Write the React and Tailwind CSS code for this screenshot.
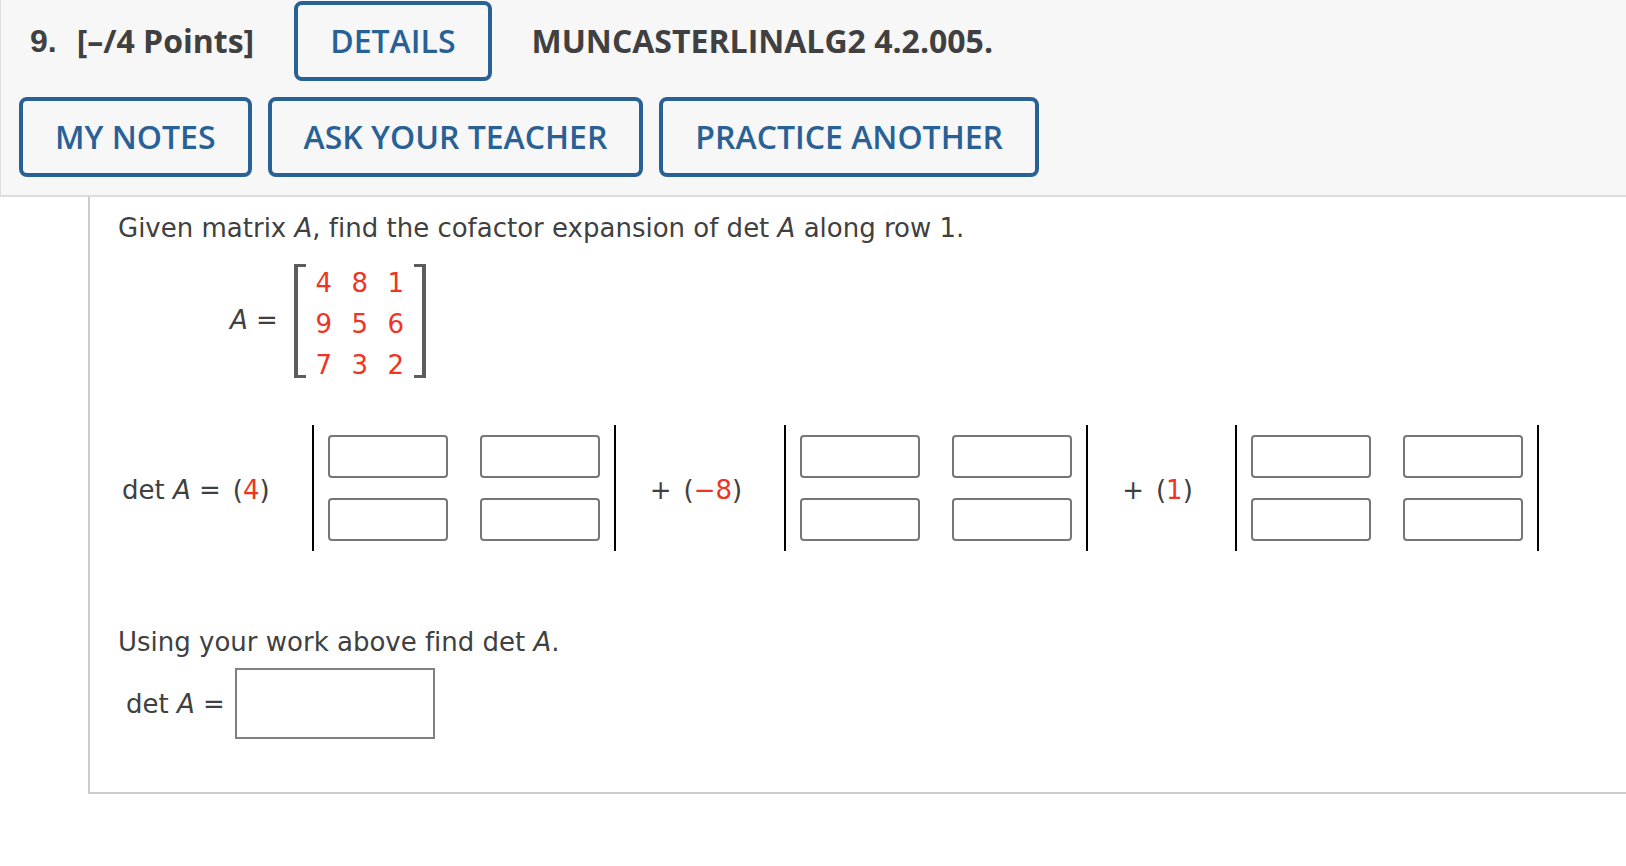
const matrix = [
  [4, 8, 1],
  [9, 5, 6],
  [7, 3, 2],
]

const terms = [
  { lead: <>det <i>A</i> = </>, coefficient: '4' },
  { lead: '+', coefficient: '−8' },
  { lead: '+', coefficient: '1' },
]

export default function App() {
  return (
    <main className="min-h-screen overflow-x-hidden bg-white font-['DejaVu_Sans',Verdana,sans-serif] text-[26px] leading-8 text-[#404040] [font-variant-ligatures:none]">
      <QuestionHeader />
      <section className="ml-[88px] border-b-2 border-l-2 border-[#cccccc] pt-[15px] pb-[53px] pl-7">
        <p>
          Given matrix <i>A</i>, find the cofactor expansion of det <i>A</i> along row 1.
        </p>
        <MatrixA />
        <div className="mt-10 flex items-center pl-1">
          {terms.map((term, index) => (
            <Term key={term.coefficient} index={index} {...term} />
          ))}
        </div>
        <p className="mt-[75px]">
          Using your work above find det <i>A</i>.
        </p>
        <div className="mt-[10px] flex items-center gap-[10px] pl-2">
          <label htmlFor="answer">
            det <i>A</i> =
          </label>
          <input id="answer" type="text" className="h-[71px] w-[200px] border-2 border-[#808080] bg-white px-2" />
        </div>
      </section>
    </main>
  )
}

function QuestionHeader() {
  return (
    <header className="border-b-2 border-l border-[#dddddd] bg-[#f7f7f7] pt-px pb-[18px] pl-[18px] font-['Open_Sans',sans-serif] text-[32px]">
      <div className="flex items-center pl-[11px] font-bold">
        <span className="font-['Liberation_Sans',Arial,sans-serif]">9.</span>
        <span className="ml-5">[–/4 Points]</span>
        <HeaderButton className="ml-10">DETAILS</HeaderButton>
        <h1 className="ml-10">MUNCASTERLINALG2 4.2.005.</h1>
      </div>
      <div className="mt-4 flex gap-4">
        <HeaderButton>MY NOTES</HeaderButton>
        <HeaderButton>ASK YOUR TEACHER</HeaderButton>
        <HeaderButton>PRACTICE ANOTHER</HeaderButton>
      </div>
    </header>
  )
}

function HeaderButton({ className = '', children }) {
  return (
    <button
      type="button"
      className={`h-20 shrink-0 rounded-lg border-4 border-[#286196] px-8 font-semibold whitespace-nowrap text-[#286196] hover:bg-white ${className}`}
    >
      {children}
    </button>
  )
}

function MatrixA() {
  return (
    <div className="mt-[18px] flex items-center pl-[112px]">
      <span className="pb-2">
        <i>A</i> =
      </span>
      <div className="ml-4 flex">
        <span className="mt-[2px] mb-[7px] w-3 border-y-3 border-l-4 border-[#5c5c5c]" />
        <table className="text-center text-[#ee3524]">
          <tbody>
            {matrix.map((row, index) => (
              <tr key={index}>
                {row.map((value) => (
                  <td key={value} className="h-[41px] w-9 min-w-9 p-0">
                    {value}
                  </td>
                ))}
              </tr>
            ))}
          </tbody>
        </table>
        <span className="mt-[2px] mb-[7px] w-3 border-y-3 border-r-4 border-[#5c5c5c]" />
      </div>
    </div>
  )
}

function Term({ lead, coefficient, index }) {
  return (
    <>
      <span className={`flex gap-3 pt-1 whitespace-nowrap ${index > 0 ? 'ml-[34px]' : ''}`}>
        <span>{lead}</span>
        <span>
          (<span className="text-[#ee3524]">{coefficient}</span>)
        </span>
      </span>
      <div className="ml-[42px] grid shrink-0 grid-cols-2 gap-x-8 gap-y-5 border-x-2 border-black px-[14px] py-[10px]">
        {['row 1, column 1', 'row 1, column 2', 'row 2, column 1', 'row 2, column 2'].map((cell) => (
          <input
            key={cell}
            type="text"
            aria-label={`Minor ${index + 1}, ${cell}`}
            className="h-[43px] w-[120px] rounded border-2 border-[#767676] bg-white px-1"
          />
        ))}
      </div>
    </>
  )
}
